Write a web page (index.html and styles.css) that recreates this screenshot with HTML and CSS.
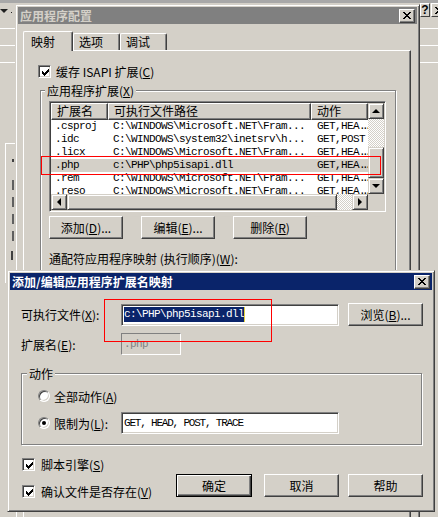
FILE: index.html
```html
<!DOCTYPE html>
<html>
<head>
<meta charset="utf-8">
<title>应用程序配置</title>
<link rel="stylesheet" href="styles.css">
</head>
<body>
<div class="desk">
  <div class="bg-mark"><span class="tri-down"></span><span class="bg-dot"></span></div>
  <div class="bg-btns">
    <span class="bgb">?</span>
    <span class="bgb bgb-x"><svg width="8" height="7" viewBox="0 0 8 7"><path d="M0 0h2v1H0zM6 0h2v1H6zM1 1h2v1H1zM5 1h2v1H5zM2 2h4v1H2zM3 3h2v1H3zM2 4h4v1H2zM1 5h2v1H1zM5 5h2v1H5zM0 6h2v1H0zM6 6h2v1H6z"/></svg></span>
  </div>
  <div class="bg-frag">
    <span class="frag-tick"></span>
    <span class="frag-dash"></span>
    <span class="frag-dash"></span>
    <span class="frag-dash"></span>
    <span class="frag-dash"></span>
    <span class="frag-j"></span>
  </div>

  <section class="win win-mid">
    <header class="cap cap-inactive">
      <span class="cap-title">应用程序配置</span>
      <span class="capbtn"><svg width="8" height="7" viewBox="0 0 8 7"><path d="M0 0h2v1H0zM6 0h2v1H6zM1 1h2v1H1zM5 1h2v1H5zM2 2h4v1H2zM3 3h2v1H3zM2 4h4v1H2zM1 5h2v1H1zM5 5h2v1H5zM0 6h2v1H0zM6 6h2v1H6z"/></svg></span>
    </header>
    <div class="mid-client">
      <div class="tabs">
        <div class="tab tab-on">映射</div>
        <div class="tab tab-2">选项</div>
        <div class="tab tab-3">调试</div>
      </div>
      <div class="panel">
        <div class="chkrow cache-row">
          <span class="cb"><svg width="7" height="7" viewBox="0 0 7 7"><path d="M6 0h1v1H6zM5 1h2v1H5zM0 2h1v1H0zM4 2h3v1H4zM0 3h2v1H0zM3 3h3v1H3zM0 4h5v1H0zM1 5h3v1H1zM2 6h1v1H2z"/></svg></span>
          <span class="chk-text">缓存 ISAPI 扩展(<u>C</u>)</span>
        </div>
        <div class="grp grp-ext">
          <span class="grp-label">应用程序扩展(<u>X</u>)</span>
          <div class="lv">
            <div class="lv-main">
              <div class="lv-head">
                <div class="hc col-ext">扩展名</div>
                <div class="hc col-path">可执行文件路径</div>
                <div class="hc col-act">动作</div>
              </div>
              <div class="lv-row"><span class="col-ext">.csproj</span><span class="col-path">C:\WINDOWS\Microsoft.NET\Fram...</span><span class="col-act">GET,HEA<span class="dots">...</span></span></div>
              <div class="lv-row"><span class="col-ext">.idc</span><span class="col-path">C:\WINDOWS\system32\inetsrv\h...</span><span class="col-act">GET,POST</span></div>
              <div class="lv-row"><span class="col-ext">.licx</span><span class="col-path">C:\WINDOWS\Microsoft.NET\Fram...</span><span class="col-act">GET,HEA<span class="dots">...</span></span></div>
              <div class="lv-row lv-sel"><span class="col-ext">.php</span><span class="col-path">c:\PHP\php5isapi.dll</span><span class="col-act">GET,HEA<span class="dots">...</span></span></div>
              <div class="lv-row"><span class="col-ext">.rem</span><span class="col-path">C:\WINDOWS\Microsoft.NET\Fram...</span><span class="col-act">GET,HEA<span class="dots">...</span></span></div>
              <div class="lv-row"><span class="col-ext">.reso</span><span class="col-path">C:\WINDOWS\Microsoft.NET\Fram...</span><span class="col-act">GET,HEA<span class="dots">...</span></span></div>
            </div>
            <div class="vscroll">
              <span class="sbtn"><i class="ar ar-up"></i></span>
              <span class="track vtrack"></span>
              <span class="thumb"></span>
              <span class="sbtn"><i class="ar ar-down"></i></span>
            </div>
            <div class="hscroll">
              <span class="sbtn"><i class="ar ar-left"></i></span>
              <span class="thumb hthumb"></span>
              <span class="track htrack"></span>
              <span class="sbtn"><i class="ar ar-right"></i></span>
            </div>
            <div class="corner"></div>
          </div>
          <div class="btnrow">
            <button class="btn">添加(<u>D</u>)...</button>
            <button class="btn">编辑(<u>E</u>)...</button>
            <button class="btn">删除(<u>R</u>)</button>
          </div>
          <div class="wild">通配符应用程序映射 (执行顺序)(<u>W</u>):</div>
        </div>
      </div>
    </div>
  </section>

  <div class="redmark red-list"></div>

  <section class="win win-front">
    <header class="cap cap-active">
      <span class="cap-title">添加/编辑应用程序扩展名映射</span>
      <span class="capbtn"><svg width="8" height="7" viewBox="0 0 8 7"><path d="M0 0h2v1H0zM6 0h2v1H6zM1 1h2v1H1zM5 1h2v1H5zM2 2h4v1H2zM3 3h2v1H3zM2 4h4v1H2zM1 5h2v1H1zM5 5h2v1H5zM0 6h2v1H0zM6 6h2v1H6z"/></svg></span>
    </header>
    <div class="front-client">
      <div class="frow frow-exe">
        <span class="flabel">可执行文件(<u>X</u>):</span>
        <div class="edit edit-exe"><span class="selected-text">c:\PHP\php5isapi.dll</span></div>
        <button class="btn btn-browse">浏览(<u>B</u>)...</button>
      </div>
      <div class="frow frow-ext">
        <span class="flabel">扩展名(<u>E</u>):</span>
        <div class="edit edit-dis">.php</div>
      </div>
      <div class="grp grp-act">
        <span class="grp-label">动作</span>
        <div class="rrow">
          <span class="radio"></span>
          <span>全部动作(<u>A</u>)</span>
        </div>
        <div class="rrow rrow-lim">
          <span class="radio radio-on"></span>
          <span class="rlabel">限制为(<u>L</u>):</span>
          <div class="edit edit-verbs">GET, HEAD, POST, TRACE</div>
        </div>
      </div>
      <div class="fbottom">
        <div class="checks">
          <div class="chkrow">
            <span class="cb"><svg width="7" height="7" viewBox="0 0 7 7"><path d="M6 0h1v1H6zM5 1h2v1H5zM0 2h1v1H0zM4 2h3v1H4zM0 3h2v1H0zM3 3h3v1H3zM0 4h5v1H0zM1 5h3v1H1zM2 6h1v1H2z"/></svg></span>
            <span class="chk-text">脚本引擎(<u>S</u>)</span>
          </div>
          <div class="chkrow">
            <span class="cb"><svg width="7" height="7" viewBox="0 0 7 7"><path d="M6 0h1v1H6zM5 1h2v1H5zM0 2h1v1H0zM4 2h3v1H4zM0 3h2v1H0zM3 3h3v1H3zM0 4h5v1H0zM1 5h3v1H1zM2 6h1v1H2z"/></svg></span>
            <span class="chk-text">确认文件是否存在(<u>V</u>)</span>
          </div>
        </div>
        <div class="dbtns">
          <button class="btn btn-def">确定</button>
          <button class="btn btn-cancel">取消</button>
          <button class="btn">帮助</button>
        </div>
      </div>
    </div>
  </section>

  <div class="redmark red-exe"></div>
</div>
</body>
</html>
```

FILE: styles.css
```css
* { box-sizing: border-box; }
html, body { margin: 0; padding: 0; }
body {
  width: 438px;
  height: 517px;
  overflow: hidden;
  background: #d4d0c8;
  font-family: "Noto Sans CJK SC", sans-serif;
  font-size: 12px;
  line-height: 13px;
  color: #000;
}
u { text-decoration: underline; text-underline-offset: 1px; }

.desk {
  position: relative;
  width: 438px;
  height: 517px;
  overflow: hidden;
  background:
    linear-gradient(#a8a8a8, #a8a8a8) 0 0 / 100% 3px no-repeat,
    repeating-linear-gradient(to bottom, transparent 0 16px, #fff 16px 17px) 0 12px / 100% 51px no-repeat,
    #d4d0c8;
}

/* ---------- background window fragments ---------- */
.bg-mark {
  position: absolute;
  left: 0;
  top: 9px;
  display: flex;
  align-items: flex-end;
  gap: 3px;
}
.tri-down {
  width: 0; height: 0;
  border-left: 4px solid transparent;
  border-right: 4px solid transparent;
  border-top: 4px solid #202020;
}
.bg-dot { width: 1px; height: 1px; background: #202020; }

.bg-btns {
  position: absolute;
  left: 420px;
  top: 3px;
  display: flex;
  gap: 1px;
}
.bgb {
  width: 10px;
  height: 14px;
  background: #d4d0c8;
  border: 1px solid;
  border-color: #fff #404040 #404040 #fff;
  font: bold 12px/12px "Liberation Sans", sans-serif;
  text-align: center;
  display: flex;
  align-items: center;
  justify-content: center;
}
.bgb-x { width: 16px; }

.bg-frag {
  position: absolute;
  left: 5px;
  top: 143px;
  width: 10px;
  height: 140px;
  border-left: 1px solid #fff;
  border-top: 1px solid #fff;
  display: flex;
  flex-direction: column;
  align-items: flex-end;
  padding-top: 15px;
  padding-right: 1px;
}
.frag-tick { width: 2px; height: 3px; background: #404040; margin-bottom: 18px; }
.frag-dash { width: 2px; height: 10px; background: #606060; margin-bottom: 7px; }
.frag-j { width: 2px; height: 9px; background: #404040; margin-top: 3px; margin-right: 1px; }

/* ---------- windows ---------- */
.win {
  position: absolute;
  background: #d4d0c8;
  border: 1px solid;
  border-color: #d4d0c8 #404040 #404040 #d4d0c8;
  box-shadow: inset 1px 1px 0 #fff, inset -1px -1px 0 #808080;
  padding: 2px;
  display: flex;
  flex-direction: column;
}
.win-mid { left: 15px; top: 4px; width: 405px; height: 560px; }
.win-front { left: 7px; top: 270px; width: 428px; height: 242px; }

.cap {
  height: 17px;
  flex: none;
  display: flex;
  align-items: center;
  justify-content: space-between;
  padding-left: 2px;
}
.cap-inactive { background: #808080; color: #d4d0c8; }
.cap-active { background: #0a246a; color: #fff; }
.cap-title { font-weight: bold; font-size: 12px; line-height: 13px; }
.capbtn {
  width: 16px;
  height: 14px;
  margin-right: 2px;
  background: #d4d0c8;
  border: 1px solid;
  border-color: #fff #404040 #404040 #fff;
  box-shadow: inset -1px -1px 0 #808080;
  display: flex;
  align-items: center;
  justify-content: center;
  padding-right: 1px;
}

/* ---------- raised / sunken ---------- */
.btn {
  font: inherit;
  color: #000;
  margin: 0;
  width: 74px;
  height: 23px;
  padding: 0;
  background: #d4d0c8;
  border: 1px solid;
  border-color: #fff #404040 #404040 #fff;
  box-shadow: inset -1px -1px 0 #808080;
  display: flex;
  align-items: center;
  justify-content: center;
  white-space: nowrap;
}

/* ---------- middle dialog ---------- */
.mid-client {
  padding: 7px 0 0 5px;
  display: flex;
  flex-direction: column;
}
.tabs {
  display: flex;
  align-items: flex-end;
  height: 19px;
  position: relative;
  z-index: 1;
}
.tab {
  height: 17px;
  background: #d4d0c8;
  border-top: 1px solid #fff;
  border-left: 1px solid #fff;
  border-right: 1px solid #404040;
  box-shadow: inset -1px 0 0 #808080;
  border-radius: 2px 2px 0 0;
  padding-left: 5px;
  line-height: 15px;
}
.tab-on { width: 50px; height: 20px; margin-bottom: -1px; padding-left: 7px; line-height: 20px; }
.tab-2 { width: 47px; }
.tab-3 { width: 47px; }

.panel {
  width: 388px;
  height: 520px;
  border-top: 1px solid #fff;
  border-left: 1px solid #fff;
  border-right: 1px solid #404040;
  box-shadow: inset -1px 0 0 #808080;
  display: flex;
  flex-direction: column;
  align-items: flex-start;
}

.chkrow { display: flex; align-items: center; height: 13px; gap: 5px; }
.cache-row { margin: 14px 0 0 14px; }
.cb {
  width: 13px;
  height: 13px;
  flex: none;
  background: #fff;
  border: 1px solid;
  border-color: #808080 #fff #fff #808080;
  box-shadow: inset 1px 1px 0 #404040, inset -1px -1px 0 #d4d0c8;
  display: flex;
  align-items: center;
  justify-content: center;
  padding: 1px 0 0 1px;
}
.chk-text { white-space: nowrap; }

.grp {
  position: relative;
  border: 1px solid #808080;
  box-shadow: 1px 1px 0 #fff, inset 1px 1px 0 #fff;
}
.grp-label {
  position: absolute;
  top: -7px;
  left: 4px;
  padding: 0 2px;
  background: #d4d0c8;
  white-space: nowrap;
  line-height: 13px;
}
.grp-ext {
  margin: 12px 0 0 16px;
  width: 356px;
  padding: 10px 0 40px 8px;
}

/* list view */
.lv {
  width: 337px;
  height: 111px;
  border: 1px solid;
  border-color: #808080 #fff #fff #808080;
  box-shadow: inset 1px 1px 0 #404040, inset -1px -1px 0 #d4d0c8;
  padding: 1px;
  display: grid;
  grid-template-columns: 317px 16px;
  grid-template-rows: 91px 16px;
  background: #fff;
}
.lv-main { overflow: hidden; background: #fff; }
.lv-head { display: flex; height: 17px; }
.hc {
  height: 17px;
  background: #d4d0c8;
  border: 1px solid;
  border-color: #fff #404040 #404040 #fff;
  box-shadow: inset -1px -1px 0 #808080;
  padding-left: 5px;
  line-height: 14px;
  white-space: nowrap;
  overflow: hidden;
}
.col-ext { width: 57px; flex: none; }
.col-path { width: 203px; flex: none; }
.col-act { width: 57px; flex: none; }
.lv-row {
  display: flex;
  height: 13px;
  font-family: "Liberation Mono", monospace;
  font-size: 11px;
  letter-spacing: -0.6px;
  line-height: 13px;
  white-space: nowrap;
}
.lv-row > span { overflow: hidden; }
.lv-row .col-ext { padding-left: 4px; }
.lv-row .col-path { padding-left: 5px; }
.lv-row .col-act { padding-left: 6px; }
.dots { letter-spacing: -3.6px; }
.lv-sel { background: #d4d0c8; }

.vscroll { display: flex; flex-direction: column; }
.hscroll { display: flex; }
.sbtn {
  width: 16px;
  height: 16px;
  flex: none;
  background: #d4d0c8;
  border: 1px solid;
  border-color: #d4d0c8 #404040 #404040 #d4d0c8;
  box-shadow: inset 1px 1px 0 #fff, inset -1px -1px 0 #808080;
  display: flex;
  align-items: center;
  justify-content: center;
}
.track {
  background-color: #fff;
  background-image: conic-gradient(#d4d0c8 25%, #fff 0 50%, #d4d0c8 0 75%, #fff 0);
  background-size: 2px 2px;
}
.vtrack { height: 28px; }
.thumb {
  height: 31px;
  background: #d4d0c8;
  border: 1px solid;
  border-color: #d4d0c8 #404040 #404040 #d4d0c8;
  box-shadow: inset 1px 1px 0 #fff, inset -1px -1px 0 #808080;
}
.hthumb { width: 270px; height: 16px; }
.htrack { width: 15px; }
.corner { background: #d4d0c8; }

.ar { width: 0; height: 0; display: block; }
.ar-up { border-left: 4px solid transparent; border-right: 4px solid transparent; border-bottom: 4px solid #000; margin-top: -1px; }
.ar-down { border-left: 4px solid transparent; border-right: 4px solid transparent; border-top: 4px solid #000; }
.ar-left { border-top: 4px solid transparent; border-bottom: 4px solid transparent; border-right: 4px solid #000; margin-left: -1px; }
.ar-right { border-top: 4px solid transparent; border-bottom: 4px solid transparent; border-left: 4px solid #000; }

.btnrow { display: flex; gap: 18px; margin-top: 4px; }
.wild { margin-top: 13px; white-space: nowrap; }

.redmark { position: absolute; border: 1px solid #ff0000; }
.red-list { left: 41px; top: 156px; width: 340px; height: 19px; }
.red-exe { left: 104px; top: 299px; width: 168px; height: 43px; }

/* ---------- front dialog ---------- */
.front-client {
  display: flex;
  flex-direction: column;
  padding: 0 9px 0 11px;
}
.frow { display: flex; align-items: center; }
.frow-exe { margin-top: 13px; height: 23px; }
.frow-ext { margin-top: 7px; height: 22px; }
.flabel { width: 100px; flex: none; white-space: nowrap; }
.edit {
  height: 22px;
  border: 1px solid;
  border-color: #808080 #fff #fff #808080;
  box-shadow: inset 1px 1px 0 #404040, inset -1px -1px 0 #d4d0c8;
  background: #fff;
  padding-left: 2px;
  display: flex;
  align-items: center;
  font-family: "Liberation Mono", monospace;
  font-size: 11px;
  letter-spacing: -0.6px;
  white-space: nowrap;
  overflow: hidden;
}
.edit-exe { width: 218px; }
.selected-text {
  background: #0a246a;
  color: #fff;
  line-height: 15px;
  height: 15px;
  display: inline-block;
  border-right: 1px solid #e0d040;
}
.btn-browse { width: 75px; margin-left: 9px; }
.edit-dis {
  width: 60px;
  background: #d4d0c8;
  color: #808080;
  box-shadow: none;
  border-color: #808080 #fff #fff #808080;
}

.grp-act {
  margin-top: 18px;
  width: 401px;
  padding: 14px 0 10px 16px;
}
.grp-act .grp-label { left: 5px; }
.rrow { display: flex; align-items: center; height: 16px; gap: 4px; }
.rrow-lim { margin-top: 8px; height: 22px; }
.rlabel { width: 63px; flex: none; white-space: nowrap; }
.radio {
  width: 12px;
  height: 12px;
  flex: none;
  border-radius: 50%;
  background: #fff;
  border: 1px solid;
  border-color: #808080 #fff #fff #808080;
  box-shadow: inset 1px 1px 0 #404040, inset -1px -1px 0 #d4d0c8;
  display: flex;
  align-items: center;
  justify-content: center;
}
.radio-on::after {
  content: "";
  width: 4px;
  height: 4px;
  border-radius: 50%;
  background: #000;
}
.edit-verbs { width: 218px; letter-spacing: -1.2px; }

.fbottom { display: flex; justify-content: space-between; margin-top: 13px; }
.checks { display: flex; flex-direction: column; gap: 14px; padding-left: 1px; }
.checks .chkrow { gap: 6px; }
.dbtns { display: flex; margin-top: 16px; }
.btn-def {
  width: 76px;
  border: 1px solid #000;
  box-shadow: inset 1px 1px 0 #fff, inset -1px -1px 0 #404040, inset -2px -2px 0 #808080;
  margin-right: 12px;
}
.dbtns .btn { width: 75px; }
.dbtns .btn-def { width: 76px; }
.btn-cancel { margin-right: 9px; }
```
